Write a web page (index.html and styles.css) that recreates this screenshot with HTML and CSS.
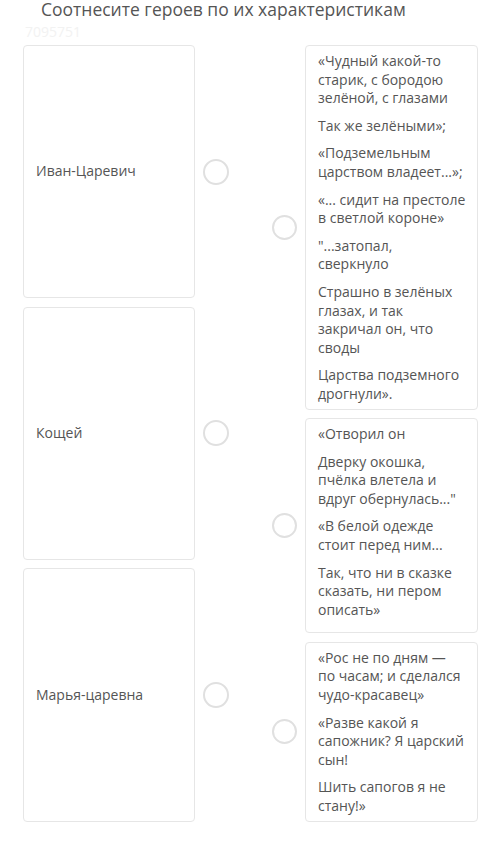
FILE: index.html
```html
<!DOCTYPE html>
<html lang="ru">
<head>
<meta charset="utf-8">
<link rel="stylesheet" href="styles.css">
</head>
<body>
<div class="page">
  <h1 class="title">Соотнесите героев по их характеристикам</h1>
  <div class="qid">7095751</div>
  <div class="match">
    <div class="col col-left">
      <div class="row">
        <div class="card card-hero">Иван-Царевич</div>
        <span class="dot"></span>
      </div>
      <div class="row">
        <div class="card card-hero">Кощей</div>
        <span class="dot"></span>
      </div>
      <div class="row">
        <div class="card card-hero">Марья-царевна</div>
        <span class="dot"></span>
      </div>
    </div>
    <div class="col col-right">
      <div class="row">
        <span class="dot"></span>
        <div class="card card-quote">
          <p>«Чудный какой-то старик, с бородою зелёной, с глазами</p>
          <p>Так же зелёными»;</p>
          <p>«Подземельным царством владеет...»;</p>
          <p><span class="nowrap">«... сидит на престоле</span> в светлой короне»</p>
          <p>"...затопал, сверкнуло</p>
          <p>Страшно в зелёных глазах, и так закричал он, что своды</p>
          <p>Царства подземного дрогнули».</p>
        </div>
      </div>
      <div class="row">
        <span class="dot"></span>
        <div class="card card-quote card-quote-tall">
          <p>«Отворил он</p>
          <p>Дверку окошка, пчёлка влетела и вдруг обернулась..."</p>
          <p>«В белой одежде стоит перед ним...</p>
          <p>Так, что ни в сказке сказать, ни пером описать»</p>
        </div>
      </div>
      <div class="row">
        <span class="dot"></span>
        <div class="card card-quote">
          <p>«Рос не по дням — по часам; и сделался чудо-красавец»</p>
          <p>«Разве какой я сапожник? Я царский сын!</p>
          <p>Шить сапогов я не стану!»</p>
        </div>
      </div>
    </div>
  </div>
</div>
</body>
</html>
```
FILE: styles.css
```css
* { box-sizing: border-box; }
html, body {
  margin: 0;
  padding: 0;
  background: #ffffff;
}
body {
  font-family: "Open Sans", "Liberation Sans", sans-serif;
  color: #555555;
}
.page {
  width: 500px;
  height: 848px;
  overflow: hidden;
  padding: 0 22px 0 23px;
}
.title {
  margin: 0 0 0 18px;
  font-size: 17.5px;
  line-height: 19px;
  font-weight: 400;
  color: #555555;
  white-space: nowrap;
}
.qid {
  margin: 3px 0 0 2px;
  font-size: 14px;
  line-height: 20px;
  height: 23px;
  color: #f2f2f2;
}
.match {
  display: flex;
  align-items: stretch;
  gap: 43px;
}
.col {
  display: flex;
  flex-direction: column;
}
.col-left {
  width: 206px;
  gap: 8.5px;
}
.col-left .row {
  flex: 1 1 0;
}
.col-right {
  width: 206px;
  gap: 8.5px;
}
.row {
  display: flex;
  align-items: center;
  gap: 8px;
}
.card {
  background: #ffffff;
  border: 1.5px solid #e6e6e6;
  border-radius: 4px;
  font-size: 14px;
  line-height: 18.6px;
  color: #555555;
}
.card-hero {
  width: 172px;
  align-self: stretch;
  display: flex;
  align-items: center;
  padding: 0 12px;
}
.card-quote {
  width: 173px;
  padding: 6px 11px 5px 12px;
}
.card-quote-tall {
  padding-bottom: 13px;
}
.card-quote p {
  margin: 0 0 9px;
}
.card-quote p:last-child {
  margin-bottom: 0;
}
.nowrap {
  white-space: nowrap;
}
.dot {
  flex: 0 0 auto;
  width: 26px;
  height: 26px;
  border: 2px solid #e0e0e0;
  border-radius: 50%;
  background: #ffffff;
}
.col-right .dot {
  width: 25px;
  height: 25px;
}
```
